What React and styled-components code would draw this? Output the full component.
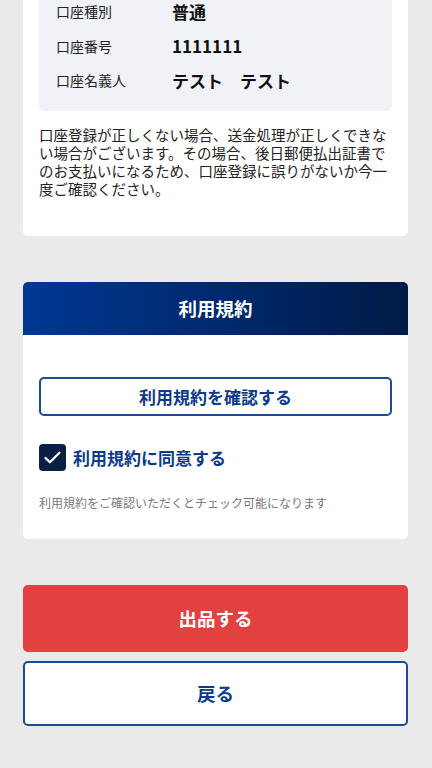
import React, { useState } from "react";
import styled, { createGlobalStyle } from "styled-components";

const GlobalStyle = createGlobalStyle`
  html, body {
    margin: 0;
    padding: 0;
    background: #eaeaea;
    font-family: "Noto Sans CJK JP", "Noto Sans", sans-serif;
  }
`;

const accountRows = [
  { label: "口座種別", value: "普通" },
  { label: "口座番号", value: "1111111" },
  { label: "口座名義人", value: "テスト\u3000テスト" },
];

function App() {
  const [agreed, setAgreed] = useState(true);

  return (
    <Page>
      <GlobalStyle />
      <TopCard>
        <InfoBox>
          {accountRows.map((row) => (
            <InfoRow key={row.label}>
              <InfoLabel>{row.label}</InfoLabel>
              <InfoValue>{row.value}</InfoValue>
            </InfoRow>
          ))}
        </InfoBox>
        <Note>
          口座登録が正しくない場合、送金処理が正しくできない場合がございます。その場合、後日郵便払出証書でのお支払いになるため、口座登録に誤りがないか今一度ご確認ください。
        </Note>
      </TopCard>

      <TermsCard>
        <TermsHeader>利用規約</TermsHeader>
        <TermsBody>
          <OutlineButton type="button">利用規約を確認する</OutlineButton>
          <CheckRow onClick={() => setAgreed(!agreed)}>
            <CheckBox $checked={agreed}>
              {agreed && (
                <svg width="21" height="21" viewBox="0 0 24 24" fill="none">
                  <path d="M4 12.5l5 5L20 6.5" stroke="#fff" strokeWidth="2.6" strokeLinecap="round" strokeLinejoin="round" />
                </svg>
              )}
            </CheckBox>
            <CheckLabel>利用規約に同意する</CheckLabel>
          </CheckRow>
          <Hint>利用規約をご確認いただくとチェック可能になります</Hint>
        </TermsBody>
      </TermsCard>

      <Actions>
        <SubmitButton type="button">出品する</SubmitButton>
        <BackButton type="button">戻る</BackButton>
      </Actions>
    </Page>
  );
}

export default App;

const Page = styled.div`
  margin-top: -6px;
  padding: 0 24px 42px 23px;
  min-height: 768px;
  box-sizing: border-box;
`;

const TopCard = styled.div`
  background: #fff;
  border-radius: 0 0 5px 5px;
  padding: 0 16px 37px;
`;

const InfoBox = styled.div`
  background: #f1f2f8;
  border-radius: 0 0 6px 6px;
  padding: 0 17px 13px;
`;

const InfoRow = styled.div`
  display: flex;
  align-items: center;
  height: 34.5px;
`;

const InfoLabel = styled.span`
  width: 116px;
  font-size: 14px;
  color: #222;
`;

const InfoValue = styled.span`
  font-size: 17px;
  font-weight: 700;
  color: #111;
`;

const Note = styled.p`
  margin: 15px 0 0;
  font-size: 14.5px;
  line-height: 18.3px;
  color: #222;
`;

const TermsCard = styled.div`
  margin-top: 46px;
  background: #fff;
  border-radius: 5px;
  overflow: hidden;
`;

const TermsHeader = styled.div`
  height: 53px;
  display: flex;
  align-items: center;
  justify-content: center;
  background: linear-gradient(90deg, #003894 0%, #00296f 50%, #001b47 100%);
  color: #fff;
  font-size: 18.5px;
  font-weight: 700;
`;

const TermsBody = styled.div`
  padding: 42px 16px 28px;
`;

const OutlineButton = styled.button`
  display: block;
  width: 100%;
  height: 39px;
  background: #fff;
  border: 2px solid #1a4a9c;
  border-radius: 5px;
  color: #0d3a8a;
  font-family: inherit;
  font-size: 17px;
  font-weight: 700;
`;

const CheckRow = styled.label`
  display: flex;
  align-items: center;
  gap: 7px;
  margin-top: 28px;
  cursor: pointer;
`;

const CheckBox = styled.span`
  width: 27px;
  height: 27px;
  border-radius: 4px;
  display: flex;
  align-items: center;
  justify-content: center;
  background: ${(p) => (p.$checked ? "#0b1f45" : "#fff")};
  border: ${(p) => (p.$checked ? "none" : "2px solid #0b1f45")};
  box-sizing: border-box;
`;

const CheckLabel = styled.span`
  font-size: 17px;
  font-weight: 700;
  color: #0d3a8a;
`;

const Hint = styled.p`
  margin: 23px 0 0;
  font-size: 12px;
  color: #7a7a7a;
`;

const Actions = styled.div`
  margin-top: 46px;
  display: flex;
  flex-direction: column;
  gap: 9px;
`;

const SubmitButton = styled.button`
  height: 67px;
  border: none;
  border-radius: 5px;
  background: #e34140;
  color: #fff;
  font-family: inherit;
  font-size: 18.5px;
  font-weight: 700;
`;

const BackButton = styled.button`
  height: 65px;
  border: 2px solid #1a4a9c;
  border-radius: 5px;
  background: #fff;
  color: #0d3a8a;
  font-family: inherit;
  font-size: 18.5px;
  font-weight: 700;
`;
